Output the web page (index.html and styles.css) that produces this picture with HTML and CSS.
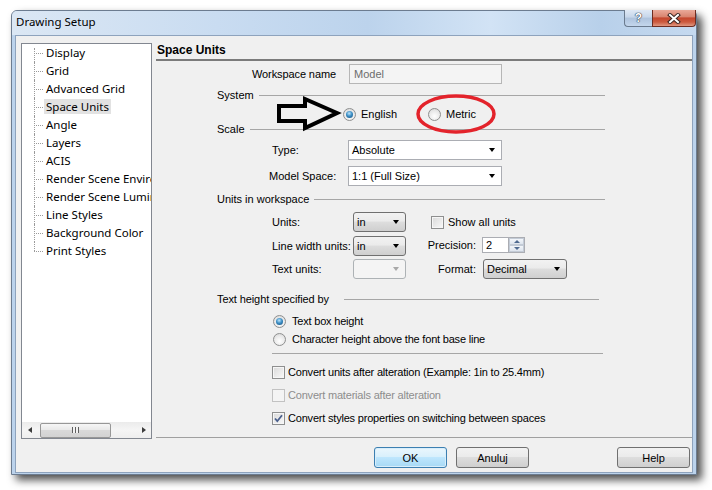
FILE: index.html
```html
<!DOCTYPE html>
<html lang="en">
<head>
  <meta charset="UTF-8" />
  <meta name="viewport" content="width=device-width, initial-scale=1.0" />
  <title>Drawing Setup</title>
  <link rel="stylesheet" href="styles.css">
</head>
<body>
  <div class="window">
    <div class="titlebar">
      <span class="title">Drawing Setup</span>
      <div class="caption">
        <span class="cap-btn help-btn">?</span>
        <span class="cap-btn close-btn">
          <svg width="14" height="11" viewBox="0 0 14 11">
            <path d="M3 2 L11 9 M11 2 L3 9" stroke="#3b2622" stroke-width="4" stroke-linecap="square" fill="none"/>
            <path d="M3 2 L11 9 M11 2 L3 9" stroke="#ffffff" stroke-width="2" stroke-linecap="square" fill="none"/>
          </svg>
        </span>
      </div>
    </div>

    <div class="frame">
      <div class="client">
        <div class="main">
          <!-- settings tree -->
          <div class="tree">
            <ul class="tree-list">
              <li>Display</li>
              <li>Grid</li>
              <li>Advanced Grid</li>
              <li><span class="selected">Space Units</span></li>
              <li>Angle</li>
              <li>Layers</li>
              <li>ACIS</li>
              <li>Render Scene Environment</li>
              <li>Render Scene Luminance</li>
              <li>Line Styles</li>
              <li>Background Color</li>
              <li>Print Styles</li>
            </ul>
            <div class="hscroll">
              <span class="scroll-arrow left"></span>
              <span class="thumb"><span class="grip"></span></span>
              <span class="scroll-arrow right"></span>
            </div>
          </div>

          <!-- Space Units page -->
          <div class="page">
            <div class="page-title">Space Units</div>

            <div class="row ws-row">
              <span class="ws-label">Workspace name</span>
              <span class="textbox disabled ws-box">Model</span>
            </div>

            <div class="group-head sys-head"><span>System</span><i></i></div>
            <div class="row radio-row">
              <span class="opt english"><span class="radio on"></span>English</span>
              <span class="opt metric"><span class="radio"></span>Metric</span>
            </div>

            <div class="group-head scale-head"><span>Scale</span><i></i></div>
            <div class="row field-row type-row">
              <span class="field-label">Type:</span>
              <span class="combo wide">Absolute<b class="drop"></b></span>
            </div>
            <div class="row field-row model-row">
              <span class="field-label">Model Space:</span>
              <span class="combo wide">1:1 (Full Size)<b class="drop"></b></span>
            </div>

            <div class="group-head units-head"><span>Units in workspace</span><i></i></div>
            <div class="row unit-row units-row">
              <span class="field-label">Units:</span>
              <span class="combo small btnstyle">in<b class="drop"></b></span>
              <span class="opt show-all"><span class="check"></span>Show all units</span>
            </div>
            <div class="row unit-row lw-row">
              <span class="field-label">Line width units:</span>
              <span class="combo small btnstyle">in<b class="drop"></b></span>
              <span class="side-label precision-label">Precision:</span>
              <span class="spin">
                <span class="spin-text">2</span>
                <span class="spin-btns">
                  <span class="spin-up"><b></b></span>
                  <span class="spin-down"><b></b></span>
                </span>
              </span>
            </div>
            <div class="row unit-row tu-row">
              <span class="field-label">Text units:</span>
              <span class="combo small disabled"><b class="drop"></b></span>
              <span class="side-label">Format:</span>
              <span class="combo format btnstyle">Decimal<b class="drop"></b></span>
            </div>

            <div class="group-head th-head"><span>Text height specified by</span><i></i></div>
            <div class="row choice-row r1">
              <span class="opt"><span class="radio on"></span>Text box height</span>
            </div>
            <div class="row choice-row r2">
              <span class="opt"><span class="radio"></span>Character height above the font base line</span>
            </div>

            <div class="separator"></div>

            <div class="row check-row c1">
              <span class="opt"><span class="check"></span>Convert units after alteration (Example: 1in to 25.4mm)</span>
            </div>
            <div class="row check-row c2">
              <span class="opt disabled"><span class="check disabled"></span>Convert materials after alteration</span>
            </div>
            <div class="row check-row c3">
              <span class="opt">
                <span class="check">
                  <svg width="11" height="11" viewBox="0 0 11 11">
                    <path d="M2 5.5 L4.3 8.2 L9 2.3" stroke="#4a5f8c" stroke-width="1.8" fill="none"/>
                  </svg>
                </span>Convert styles properties on switching between spaces
              </span>
            </div>

            <div class="page-bottom"></div>

            <!-- annotations drawn over the page -->
            <svg class="mark-arrow" width="68" height="40" viewBox="0 0 68 40">
              <polygon points="4,11 30,11 30,4 62,18 30,33 30,26 4,26" fill="none" stroke="#000000" stroke-width="4" stroke-linejoin="miter"/>
            </svg>
            <svg class="mark-ellipse" width="86" height="46" viewBox="0 0 86 46">
              <ellipse cx="43" cy="23" rx="38" ry="18" fill="none" stroke="#e3232b" stroke-width="3.5"/>
            </svg>
          </div>
        </div>

        <div class="footer">
          <button class="btn default">OK</button>
          <button class="btn">Anuluj</button>
          <button class="btn help">Help</button>
        </div>
      </div>
    </div>
  </div>
</body>
</html>
```

FILE: styles.css
```css
* {
  box-sizing: border-box;
}

html,
body {
  margin: 0;
  padding: 0;
}

body {
  width: 712px;
  height: 490px;
  overflow: hidden;
  background: #ffffff;
  font-family: "Liberation Sans", Arial, sans-serif;
  font-size: 11px;
  color: #000000;
}

/* window frame */

.window {
  margin: 10px 0 0 11px;
  width: 686px;
  height: 465px;
  display: flex;
  flex-direction: column;
  border: 1px solid #6c7c90;
  border-radius: 6px 6px 0 0;
  background: #bcd3ec;
  box-shadow: 5px 5px 8px rgba(0, 0, 0, 0.7);
}

.titlebar {
  height: 24px;
  flex: none;
  display: flex;
  align-items: flex-start;
  padding-left: 4px;
  border-radius: 5px 5px 0 0;
  background: linear-gradient(to right, #dbe7f4 0%, #c9dcf1 30%, #bcd3ec 52%, #d2e3f5 70%, #b8d0ea 86%, #c5d9ef 100%);
}

.title {
  padding-top: 3px;
  font-family: "Noto Sans", sans-serif;
  font-size: 11.5px;
  line-height: 15px;
}

.caption {
  margin-left: auto;
  margin-top: -1px;
  display: flex;
}

.cap-btn {
  height: 17px;
  display: flex;
  align-items: center;
  justify-content: center;
  border: 1px solid #6a7a8e;
  border-top: none;
}

.help-btn {
  width: 28px;
  border-right: none;
  border-radius: 0 0 0 4px;
  background: linear-gradient(#dfe9f5, #c6d6ea 45%, #aec3dd 50%, #c3d6ec);
  color: #ffffff;
  font-weight: bold;
  font-size: 12px;
  text-shadow: 0 0 1px #2c3848, 0 0 1px #2c3848, 0 0 1px #2c3848;
}

.close-btn {
  width: 44px;
  border-color: #6e2c20;
  border-radius: 0 0 4px 0;
  background: linear-gradient(#eaa999, #d98570 42%, #c4472e 50%, #cc5a3e 75%, #e09780);
}

.frame {
  flex: 1;
  display: flex;
  padding: 0 3px 1px 3px;
}

.client {
  flex: 1;
  display: flex;
  flex-direction: column;
  border: 1px solid #8ea3bd;
  background: #f0f0f0;
}

.main {
  display: flex;
  padding: 7px 0 0 5px;
}

/* tree on the left */

.tree {
  width: 131px;
  height: 396px;
  flex: none;
  display: flex;
  flex-direction: column;
  border: 1px solid #828790;
  background: #ffffff;
}

.tree-list {
  flex: 1;
  margin: 0;
  padding: 0;
  list-style: none;
  overflow: hidden;
  font-family: "Noto Sans", sans-serif;
  font-size: 11.5px;
}

.tree-list li {
  position: relative;
  height: 18px;
  line-height: 18px;
  padding-left: 24px;
  white-space: nowrap;
}

.tree-list li::before {
  content: "";
  position: absolute;
  left: 12px;
  top: 9px;
  width: 9px;
  border-top: 1px dotted #9a9a9a;
}

.tree-list li::after {
  content: "";
  position: absolute;
  left: 12px;
  top: 0;
  bottom: 0;
  border-left: 1px dotted #9a9a9a;
}

.tree-list li:first-child::after {
  top: 4px;
}

.tree-list li:last-child::after {
  bottom: 9px;
}

.tree-list .selected {
  padding: 0 2px;
  margin-left: -2px;
  background: #e2e2e2;
}

.hscroll {
  height: 16px;
  flex: none;
  display: flex;
  align-items: center;
  background: linear-gradient(#ebebeb, #f5f5f5 50%, #eeeeee);
}

.scroll-arrow {
  width: 0;
  height: 0;
  border-top: 3.5px solid transparent;
  border-bottom: 3.5px solid transparent;
}

.scroll-arrow.left {
  margin-left: 6px;
  border-right: 4px solid #3c3c3c;
}

.scroll-arrow.right {
  margin-left: auto;
  margin-right: 5px;
  border-left: 4px solid #3c3c3c;
}

.thumb {
  margin-left: 8px;
  width: 71px;
  height: 15px;
  display: flex;
  align-items: center;
  justify-content: center;
  border: 1px solid #979797;
  border-radius: 2px;
  background: linear-gradient(#f6f6f6, #e9e9e9 45%, #d9d9d9 50%, #d2d2d2);
}

.grip {
  width: 7px;
  height: 6px;
  background: repeating-linear-gradient(to right, #5f5f5f 0, #5f5f5f 1px, #f2f2f2 1px, #f2f2f2 3px);
}

/* page on the right */

.page {
  position: relative;
  width: 536px;
  margin-left: 4px;
  display: flex;
  flex-direction: column;
}

.page-title {
  height: 18px;
  padding-left: 1px;
  font-size: 12px;
  font-weight: bold;
  line-height: 15px;
  border-bottom: 2px solid #7b7b7b;
}

.row {
  display: flex;
  align-items: center;
  flex: none;
}

.ws-row {
  height: 20px;
  margin-top: 3px;
}

.ws-label {
  width: 180px;
  text-align: right;
  letter-spacing: -0.1px;
}

.textbox {
  height: 20px;
  display: flex;
  align-items: center;
  padding-left: 4px;
  border: 1px solid #abadb3;
  background: #ffffff;
}

.textbox.disabled {
  border-color: #b6b6b6;
  background: #f4f4f4;
  color: #6d6d6d;
}

.ws-box {
  margin-left: 13px;
  width: 153px;
}

.group-head {
  height: 14px;
  width: 449px;
  display: flex;
  align-items: center;
  padding-left: 61px;
  flex: none;
}

.group-head i {
  flex: 1;
  margin-left: 5px;
  border-top: 1px solid #a6a6a6;
}

.sys-head {
  margin-top: 4px;
}

.scale-head {
  margin-top: 1px;
}

.units-head {
  margin-top: 6px;
}

.th-head {
  margin-top: 13px;
  width: 443px;
  letter-spacing: -0.1px;
}

.th-head i {
  margin-left: 15px;
}

.opt {
  display: flex;
  align-items: center;
  white-space: nowrap;
}

.opt.disabled {
  color: #8d8d8d;
}

.radio-row {
  height: 14px;
  margin-top: 5px;
  padding-left: 187px;
}

.english {
  width: 85px;
}

.radio {
  position: relative;
  width: 13px;
  height: 13px;
  flex: none;
  margin-right: 5px;
  border: 1px solid #8e8f8f;
  border-radius: 50%;
  background: radial-gradient(circle at 50% 65%, #ffffff, #eaeaea 55%, #d2d2d2);
}

.radio.on::after {
  content: "";
  position: absolute;
  left: 2px;
  top: 2px;
  width: 7px;
  height: 7px;
  border-radius: 50%;
  background: radial-gradient(circle at 45% 35%, #bfe6fc, #3e90c6 45%, #124f7e 95%);
}

.check {
  width: 13px;
  height: 13px;
  flex: none;
  margin-right: 3px;
  display: flex;
  align-items: center;
  justify-content: center;
  border: 1px solid #8e8f8f;
  background: linear-gradient(135deg, #d9d9d9, #f9f9f9);
  box-shadow: inset 0 0 0 1px #f6f6f6;
}

.check.disabled {
  border-color: #c2c2c2;
  background: #f4f4f4;
  box-shadow: none;
}

.field-row {
  height: 20px;
}

.type-row {
  margin-top: 4px;
}

.model-row {
  margin-top: 6px;
}

.field-label {
  width: 192px;
  padding-left: 116px;
  flex: none;
  white-space: nowrap;
}

.model-row .field-label {
  padding-left: 113px;
}

.combo {
  height: 20px;
  display: flex;
  align-items: center;
  padding-left: 3px;
  border: 1px solid #abadb3;
  background: #ffffff;
  flex: none;
}

.combo.wide {
  width: 154px;
}

.combo.small {
  width: 53px;
}

.combo.format {
  width: 84px;
}

.combo.btnstyle {
  border-color: #707070;
  border-radius: 3px;
  background: linear-gradient(#f2f2f2, #ebebeb 45%, #dddddd 50%, #cfcfcf);
}

.combo.disabled {
  border-color: #adb2b5;
  border-radius: 3px;
  background: #f4f4f4;
}

.drop {
  margin-left: auto;
  margin-right: 6px;
  width: 0;
  height: 0;
  border-left: 3.5px solid transparent;
  border-right: 3.5px solid transparent;
  border-top: 4px solid #000000;
}

.combo.disabled .drop {
  border-top-color: #a8a8a8;
}

.unit-row {
  height: 20px;
}

.unit-row .field-label {
  width: 197px;
}

.units-row {
  margin-top: 6px;
}

.lw-row {
  margin-top: 4px;
}

.tu-row {
  margin-top: 3px;
}

.show-all {
  margin-left: 25px;
}

.show-all .check {
  margin-right: 4px;
}

.side-label {
  width: 70px;
  text-align: right;
  flex: none;
}

.precision-label {
  margin-top: -3px;
}

.tu-row .side-label {
  margin-right: 7px;
}

.spin {
  margin-left: 6px;
  width: 43px;
  height: 16px;
  margin-top: -3px;
  display: flex;
}

.spin-text {
  flex: 1;
  display: flex;
  align-items: center;
  padding-left: 3px;
  border: 1px solid #abadb3;
  border-right: none;
  background: #ffffff;
}

.spin-btns {
  width: 17px;
  display: flex;
  flex-direction: column;
  border: 1px solid #abadb3;
  background: #ffffff;
}

.spin-up,
.spin-down {
  flex: 1;
  display: flex;
  align-items: center;
  justify-content: center;
  border: 1px solid #c3cbd6;
  background: linear-gradient(#f3f6fa, #dde4ed);
}

.spin-up b {
  width: 0;
  height: 0;
  border-left: 3px solid transparent;
  border-right: 3px solid transparent;
  border-bottom: 3px solid #4f6a8f;
}

.spin-down b {
  width: 0;
  height: 0;
  border-left: 3px solid transparent;
  border-right: 3px solid transparent;
  border-top: 3px solid #4f6a8f;
}

.choice-row {
  height: 14px;
  padding-left: 117px;
  letter-spacing: -0.2px;
}

.choice-row .radio {
  margin-right: 6px;
}

.r1 {
  margin-top: 8px;
}

.r2 {
  margin-top: 4px;
}

.separator {
  margin: 7px 0 0 116px;
  width: 331px;
  height: 1px;
  flex: none;
  background: #a6a6a6;
}

.check-row {
  height: 14px;
  padding-left: 116px;
  letter-spacing: -0.2px;
}

.c1 {
  margin-top: 11px;
}

.c2,
.c3 {
  margin-top: 9px;
}

.page-bottom {
  margin-top: 12px;
  height: 1px;
  flex: none;
  background: #a0a0a0;
}

.mark-arrow {
  position: absolute;
  left: 119px;
  top: 52px;
}

.mark-ellipse {
  position: absolute;
  left: 257px;
  top: 48px;
}

/* dialog buttons */

.footer {
  display: flex;
  padding: 8px 2px 0 358px;
}

.btn {
  width: 73px;
  height: 21px;
  padding: 0;
  border: 1px solid #707070;
  border-radius: 3px;
  background: linear-gradient(#f2f2f2, #ebebeb 45%, #dddddd 50%, #cfcfcf);
  font-family: "Liberation Sans", Arial, sans-serif;
  font-size: 11px;
  color: #000000;
}

.btn + .btn {
  margin-left: 9px;
}

.btn.default {
  border-color: #3c7fb1;
  background: linear-gradient(#eaf6fd, #d9f0fc 45%, #bee6fd 50%, #a7d9f5);
  box-shadow: inset 0 0 0 1px #d8eefb;
}

.btn.help {
  margin-left: auto;
}
```
